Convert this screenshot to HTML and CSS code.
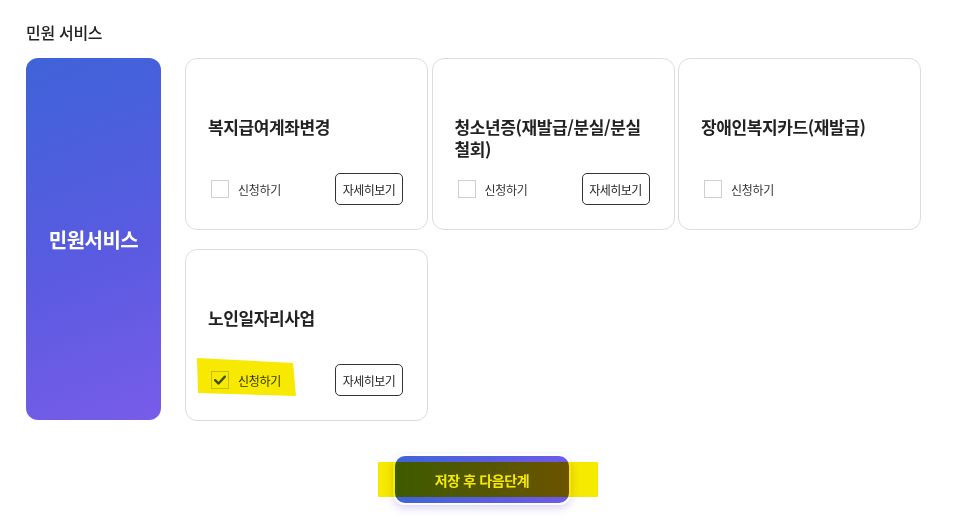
FILE: index.html
```html
<!DOCTYPE html>
<html lang="ko">
<head>
<meta charset="utf-8">
<title>민원 서비스</title>
<link rel="stylesheet" href="styles.css">
</head>
<body>
<div class="page">
  <h2 class="section-title">민원 서비스</h2>
  <div class="layout">
    <div class="panel">민원서비스</div>
    <div class="grid">
      <div class="card">
        <div class="card-title">복지급여계좌변경</div>
        <div class="card-row">
          <label class="check"><span class="box"></span><span class="label">신청하기</span></label>
          <button class="detail">자세히보기</button>
        </div>
      </div>
      <div class="card">
        <div class="card-title">청소년증(재발급/분실/분실<br>철회)</div>
        <div class="card-row">
          <label class="check"><span class="box"></span><span class="label">신청하기</span></label>
          <button class="detail">자세히보기</button>
        </div>
      </div>
      <div class="card">
        <div class="card-title">장애인복지카드(재발급)</div>
        <div class="card-row">
          <label class="check"><span class="box"></span><span class="label">신청하기</span></label>
        </div>
      </div>
      <div class="card">
        <div class="card-title">노인일자리사업</div>
        <div class="card-row">
          <label class="check checked"><span class="box"><svg viewBox="0 0 18 18" width="18" height="18"><path d="M3.5 9.2 L7.4 13 L14.5 5.2" fill="none" stroke="#3d5a12" stroke-width="2.6" stroke-linecap="round" stroke-linejoin="round"/></svg></span><span class="label">신청하기</span><span class="marker marker-check"></span></label>
          <button class="detail">자세히보기</button>
        </div>
      </div>
    </div>
  </div>
  <div class="actions">
    <div class="submit-wrap">
      <button class="submit">저장 후 다음단계</button>
      <span class="marker marker-submit"></span>
    </div>
  </div>
</div>
</body>
</html>
```
FILE: styles.css
```css
* { box-sizing: border-box; }
html, body { margin: 0; padding: 0; background: #fff; }
body {
  font-family: "Noto Sans CJK KR", "Noto Sans", sans-serif;
  color: #222;
}
.page {
  width: 972px;
  height: 526px;
  padding: 21px 0 0 26px;
  overflow: hidden;
}
.section-title {
  margin: 0;
  font-size: 16px;
  line-height: 22px;
  font-weight: 500;
  color: #222;
  letter-spacing: -0.3px;
}
.layout {
  display: flex;
  gap: 24px;
  margin-top: 15px;
}
.panel {
  width: 135px;
  height: 362px;
  border-radius: 12px;
  background: linear-gradient(160deg, #3f63d9 0%, #5a5be0 55%, #785ce9 100%);
  color: #fff;
  font-size: 20px;
  font-weight: 700;
  letter-spacing: -0.5px;
  display: flex;
  align-items: center;
  justify-content: center;
}
.grid {
  display: grid;
  grid-template-columns: 243px 243px 243px;
  grid-auto-rows: 172px;
  column-gap: 3.5px;
  row-gap: 19px;
}
.card {
  border: 1px solid #dcdcdc;
  border-radius: 12px;
  padding: 57px 24px 24px 22px;
  display: flex;
  flex-direction: column;
}
.card-title {
  font-size: 17px;
  line-height: 22px;
  font-weight: 700;
  letter-spacing: -0.4px;
  color: #222;
}
.card-row {
  margin-top: auto;
  display: flex;
  align-items: center;
  justify-content: space-between;
  height: 32px;
}
.check {
  position: relative;
  display: flex;
  align-items: center;
  padding-left: 3px;
}
.box {
  width: 18px;
  height: 18px;
  border: 1px solid #cfcfcf;
  background: #fff;
  display: inline-flex;
  align-items: center;
  justify-content: center;
}
.box svg { display: block; }
.label {
  margin-left: 9px;
  font-size: 12px;
  color: #333;
  letter-spacing: -0.3px;
}
.detail {
  width: 68px;
  height: 32px;
  border: 1px solid #333;
  border-radius: 5px;
  background: #fff;
  font-family: inherit;
  font-size: 12px;
  color: #222;
  letter-spacing: -0.5px;
  padding: 0;
}
.actions {
  display: flex;
  justify-content: center;
  padding-right: 34px;
  margin-top: 33px;
}
.submit-wrap {
  position: relative;
}
.submit {
  width: 178px;
  height: 51px;
  border: 2px solid #fff;
  border-radius: 12px;
  background: linear-gradient(90deg, #3f63d9 0%, #6f5ae8 100%);
  box-shadow: 0 3px 8px rgba(110, 95, 230, 0.28);
  color: #fff;
  font-family: inherit;
  font-size: 14px;
  font-weight: 700;
  letter-spacing: -0.4px;
}
.marker {
  position: absolute;
  background: #f7ea00;
  mix-blend-mode: multiply;
  pointer-events: none;
}
.marker-submit {
  left: -15px;
  right: -27px;
  top: 8px;
  height: 35px;
}
.marker-check {
  left: -11px;
  top: -13px;
  width: 99px;
  height: 38px;
  clip-path: polygon(0 0, 97% 13%, 100% 100%, 1% 92%);
}
```
